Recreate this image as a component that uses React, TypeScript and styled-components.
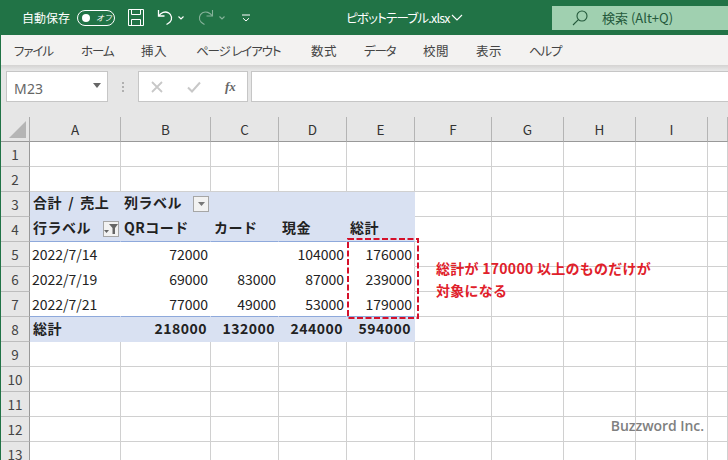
import React from "react";
import styled, { createGlobalStyle } from "styled-components";

const Global = createGlobalStyle`
  html, body { margin: 0; padding: 0; background: #fff; }
  * { box-sizing: border-box; }
`;

const jp = `"Noto Sans CJK JP", "Noto Sans", sans-serif`;
const COLS = [91, 90, 68, 68, 68, 77, 72, 72, 72, 20];
const LETTERS = ["A", "B", "C", "D", "E", "F", "G", "H", "I", ""];

const Page = styled.div`
  width: 728px; height: 460px; overflow: hidden; display: flex; flex-direction: column;
  font-family: ${jp}; background: #fff; position: relative;
`;
const TitleBar = styled.div`
  height: 35px; flex: none; background: #217346; color: #fff; display: flex; align-items: center;
  padding: 0 0 0 22px; position: relative;
`;
const AutoSave = styled.span`font-size: 12px; width: 55px; flex: none; white-space: nowrap;`;
const Toggle = styled.span`
  width: 38px; height: 16px; border: 1px solid #fff; border-radius: 8px; flex: none; display: flex;
  align-items: center; padding: 0 0 0 4px; font-size: 8px; gap: 6px; font-style: italic;
  i { width: 8px; height: 8px; border-radius: 50%; background: #fff; flex: none; }
`;
const IconSlot = styled.span<{ $w: number; $ml: number; $dim?: boolean }>`
  width: ${(p) => p.$w}px; margin-left: ${(p) => p.$ml}px; flex: none; display: flex; align-items: center; justify-content: center;
  opacity: ${(p) => (p.$dim ? 0.45 : 1)};
  svg { display: block; }
`;
const FileName = styled.span`
  margin-left: 96px; width: 104px; flex: none; font-size: 12.5px; white-space: nowrap; font-feature-settings: "palt"; letter-spacing: -0.8px;
`;
const SearchBox = styled.div`
  margin-left: auto; width: 176px; height: 24px; background: #a0d0b0; color: #24593b; display: flex; align-items: center;
  padding-left: 20px; font-size: 13px; gap: 14px;
`;
const Body = styled.div`
  flex: 1; display: flex; flex-direction: column; border-left: 1px solid #217346; min-height: 0; position: relative;
`;
const Tabs = styled.div`
  height: 30px; flex: none; background: #f3f2f1; display: flex; align-items: center; padding-left: 13px; gap: 28px;
`;
const Tab = styled.span<{ $w: number; $ls: number }>`
  width: ${(p) => p.$w}px; flex: none; font-size: 12.5px; color: #444; white-space: nowrap; font-feature-settings: "palt";
  letter-spacing: ${(p) => p.$ls}px;
`;
const Shade = styled.div`height: 5px; flex: none; background: linear-gradient(#d4d3d2, #e6e6e6);`;
const FormulaBar = styled.div`
  height: 47px; flex: none; background: #e6e6e6; display: flex; align-items: flex-start; padding: 1px 0 0 5px;
`;
const NameBox = styled.div`
  width: 102px; height: 31px; background: #fff; border: 1px solid #c6c6c6; display: flex; align-items: center;
  justify-content: space-between; padding: 3px 6px 0 7px; font-size: 14px; color: #666; letter-spacing: 0.2px;
  font-family: "Noto Sans", sans-serif;
  i { width: 0; height: 0; border: 4px solid transparent; border-top: 5px solid #666; border-bottom: 0; margin-top: -5px; }
`;
const Grip = styled.div`
  width: 30px; height: 31px; flex: none; display: flex; flex-direction: column; align-items: center; justify-content: center; gap: 2px;
  i { width: 2px; height: 2px; background: #b0b0b0; }
`;
const FxBox = styled.div`
  width: 110px; height: 31px; flex: none; background: #fff; border: 1px solid #c6c6c6; display: flex; align-items: center;
  padding-left: 12px; gap: 24px;
`;
const Fx = styled.span`font: italic bold 13px "Liberation Serif", serif; color: #666;`;
const FormulaInput = styled.div`flex: 1; height: 31px; margin-left: 3px; background: #fff; border: 1px solid #c6c6c6; border-right: 0;`;

const Sheet = styled.div`
  display: grid; grid-template-columns: 29px ${COLS.map((c) => c + "px").join(" ")}; grid-auto-rows: 25px;
  position: relative; flex: none;
`;
const Corner = styled.div`
  background: #e6e6e6; border-right: 1px solid #aaa; border-bottom: 1px solid #999; padding: 4px 0 0 8px;
  i { display: block; width: 17px; height: 17px; background: #b5b5b5; clip-path: polygon(100% 0, 100% 100%, 0 100%); }
`;
const ColHead = styled.div`
  background: #e6e6e6; border-right: 1px solid #b4b4b4; border-bottom: 1px solid #999; font-size: 13.5px; color: #333;
  display: flex; align-items: center; justify-content: center;
`;
const RowHead = styled.div`
  background: #e6e6e6; border-right: 1px solid #999; border-bottom: 1px solid #bdbdbd; font-size: 13.5px; color: #444;
  display: flex; align-items: center; justify-content: center;
`;
const Cell = styled.div<{ $fill?: boolean; $bold?: boolean; $right?: boolean; $plain?: boolean; $line?: boolean; $edge?: boolean; $up?: number }>`
  background: ${(p) => (p.$fill ? "#d9e1f2" : "#fff")};
  border-right: 1px solid ${(p) => (p.$fill ? "#d9e1f2" : p.$plain && !p.$edge ? "#fff" : "#d0d0d0")};
  border-bottom: 1px solid ${(p) => (p.$line ? "#8ea9db" : p.$fill ? "#d9e1f2" : p.$plain ? "#fff" : "#d0d0d0")};
  font-size: 14px; font-weight: ${(p) => (p.$bold ? 700 : 400)}; color: #222; line-height: 24px; white-space: nowrap;
  padding: 0 ${(p) => (p.$bold ? 3 : 2)}px ${(p) => p.$up ?? 0}px; text-align: ${(p) => (p.$right ? "right" : "left")};
  display: flex; align-items: center; justify-content: ${(p) => (p.$right ? "flex-end" : "space-between")};
  letter-spacing: ${(p) => (p.$bold ? "0.5px" : "0")}; word-spacing: 2.5px;
`;
const PivotBtn = styled.span`
  width: 16px; height: 16px; flex: none; background: #f2f2f2; border: 1px solid #a6a6a6; display: flex; align-items: center; justify-content: center;
  margin-right: -2px; margin-top: 4px; svg { display: block; }
`;
const Dashed = styled.svg`
  position: absolute; left: 346px; top: 121px; pointer-events: none; display: block;
`;
const Note = styled.div`
  position: absolute; left: 435px; top: 140px; color: #e0202a; font-size: 14px; font-weight: 700; line-height: 22px; white-space: nowrap;
  letter-spacing: 0.27px;
`;
const Mark = styled.div`
  position: absolute; right: 24px; bottom: 25px; color: #808080; font: 600 14px "Open Sans", sans-serif; letter-spacing: -0.05px;
`;

const Save = () => (
  <svg width="16" height="17" viewBox="0 0 16 17" fill="none" stroke="#fff" strokeWidth="1">
    <path d="M.5.5h15v16H.5z" />
    <path d="M3.5.5v5h9v-5M3.5 16.5v-6h9v6" />
  </svg>
);
const Undo = () => (
  <svg width="17" height="17" viewBox="0 0 17 17" fill="none" stroke="#fff" strokeWidth="1.3">
    <path d="M1.5 1v6h6" />
    <path d="M1.800 6.800C4 3.500 8 2 11.500 3.800c3.500 2 4 6.500 1.500 9.200-1 1-2 1.700-3.500 2.500" />
  </svg>
);
const Redo = () => (
  <svg width="17" height="17" viewBox="0 0 17 17" fill="none" stroke="#fff" strokeWidth="1.1">
    <path d="M15.500 1v6h-6" />
    <path d="M15.200 6.800C13 3.500 9 2 5.500 3.800c-3.500 2-4 6.500-1.500 9.200 1 1 2 1.700 3.500 2.500" />
  </svg>
);
const Caret = () => (
  <svg width="6" height="4" viewBox="0 0 6 4" fill="none" stroke="#fff" strokeWidth="1.1"><path d="M.5.5 3 3 5.500.5" /></svg>
);
const Customize = () => (
  <svg width="8" height="8" viewBox="0 0 8 8" fill="none" stroke="#fff"><path d="M0 1h8" /><path d="M1 4.200 4 7l3-2.800" /></svg>
);
const Chevron = () => (
  <svg width="12" height="7" viewBox="0 0 12 7" fill="none" stroke="#fff" strokeWidth="1.1"><path d="M1 1l5 5 5-5" /></svg>
);
const Lens = () => (
  <svg width="16" height="16" viewBox="0 0 16 16" fill="none" stroke="#24593b" strokeWidth="1.1">
    <circle cx="10" cy="6" r="5" /><path d="M6.400 9.600 1 15" />
  </svg>
);
const Cross = () => (
  <svg width="12" height="12" viewBox="0 0 12 12" stroke="#c8c8c8" strokeWidth="1.8"><path d="M1 1l10 10M11 1 1 11" /></svg>
);
const Check = () => (
  <svg width="14" height="12" viewBox="0 0 14 12" fill="none" stroke="#c8c8c8" strokeWidth="2"><path d="M1 6.500 5 10.500 13 1.500" /></svg>
);
const DownTri = () => (
  <svg width="7" height="4" viewBox="0 0 7 4"><path d="M0 0h7L3.500 4z" fill="#777" /></svg>
);
const FilterTri = () => (
  <svg width="14" height="12" viewBox="0 0 14 12">
    <path d="M0 7h5L2.500 10z" fill="#666" />
    <path d="M5 1h9L11 5v6H8.500V5z" fill="#666" />
  </svg>
);

type C = { t?: React.ReactNode; btn?: React.ReactNode; right?: boolean };
const pivot: C[][] = [
  [{ t: "合計 / 売上" }, { t: "列ラベル", btn: <DownTri /> }, {}, {}, {}],
  [{ t: "行ラベル", btn: <FilterTri /> }, { t: "QRコード" }, { t: "カード" }, { t: "現金" }, { t: "総計" }],
  [{ t: "2022/7/14" }, { t: "72000", right: true }, {}, { t: "104000", right: true }, { t: "176000", right: true }],
  [{ t: "2022/7/19" }, { t: "69000", right: true }, { t: "83000", right: true }, { t: "87000", right: true }, { t: "239000", right: true }],
  [{ t: "2022/7/21" }, { t: "77000", right: true }, { t: "49000", right: true }, { t: "53000", right: true }, { t: "179000", right: true }],
  [{ t: "総計" }, { t: "218000", right: true }, { t: "132000", right: true }, { t: "244000", right: true }, { t: "594000", right: true }],
];
const TABS: [string, number, number][] = [
  ["ファイル", 39, -1.1], ["ホーム", 32, -1.1], ["挿入", 27, 0.5], ["ページ レイアウト", 87, -1.1],
  ["数式", 25, 0.5], ["データ", 31, -1.2], ["校閲", 25, 0.5], ["表示", 25, 0.5], ["ヘルプ", 32, -1.2],
];

export default function App() {
  const rows = Array.from({ length: 13 }, (_, i) => i + 1);
  return (
    <Page>
      <Global />
      <TitleBar>
        <AutoSave>自動保存</AutoSave>
        <Toggle><i />オフ</Toggle>
        <IconSlot $w={16} $ml={13}><Save /></IconSlot>
        <IconSlot $w={17} $ml={13}><Undo /></IconSlot>
        <IconSlot $w={6} $ml={4}><Caret /></IconSlot>
        <IconSlot $w={17} $ml={13} $dim><Redo /></IconSlot>
        <IconSlot $w={6} $ml={5} $dim><Caret /></IconSlot>
        <IconSlot $w={8} $ml={17}><Customize /></IconSlot>
        <FileName>ピボットテーブル.xlsx</FileName>
        <IconSlot $w={12} $ml={1}><Chevron /></IconSlot>
        <SearchBox><Lens />検索 (Alt+Q)</SearchBox>
      </TitleBar>
      <Body>
        <Tabs>{TABS.map(([t, w, ls]) => <Tab key={t} $w={w} $ls={ls}>{t}</Tab>)}</Tabs>
        <Shade />
        <FormulaBar>
          <NameBox>M23<i /></NameBox>
          <Grip><i /><i /><i /></Grip>
          <FxBox><Cross /><Check /><Fx>fx</Fx></FxBox>
          <FormulaInput />
        </FormulaBar>
        <Sheet>
          <Corner><i /></Corner>
          {LETTERS.map((l, i) => <ColHead key={i}>{l}</ColHead>)}
          {rows.map((r) => (
            <React.Fragment key={r}>
              <RowHead>{r}</RowHead>
              {COLS.map((_, c) => {
                const pr = r >= 3 && r <= 8 && c < 5 ? pivot[r - 3][c] : null;
                if (!pr) return <Cell key={c} />;
                const fill = r === 3 || r === 4 || r === 8;
                return (
                  <Cell
                    key={c}
                    $fill={fill}
                    $bold={fill}
                    $plain={!fill}
                    $edge={c === 4}
                    $right={pr.right}
                    $line={r === 4 || r === 7}
                    $up={r < 5 ? 4 : r === 8 ? 2 : 0}
                  >
                    {pr.t}
                    {pr.btn && <PivotBtn>{pr.btn}</PivotBtn>}
                  </Cell>
                );
              })}
            </React.Fragment>
          ))}
          <Dashed width="72" height="81" viewBox="0 0 72 81">
            <rect x="1" y="1" width="70" height="79" fill="none" stroke="#d5102a" strokeWidth="2" strokeDasharray="6 2.500" />
          </Dashed>
          <Note>総計が 170000 以上のものだけが<br />対象になる</Note>
        </Sheet>
        <Mark>Buzzword Inc.</Mark>
      </Body>
    </Page>
  );
}
